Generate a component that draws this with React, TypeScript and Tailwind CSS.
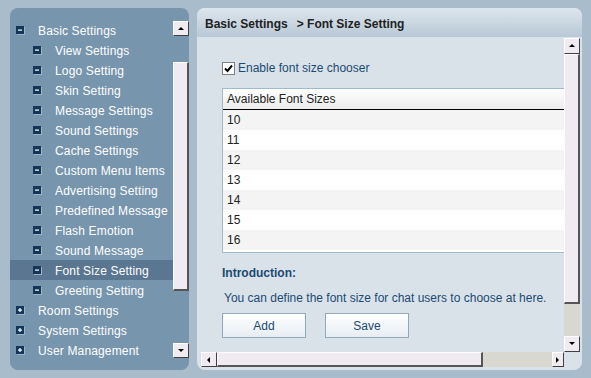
import React from "react";

type NavItem = {
  label: string;
  level: 0 | 1;
  open?: boolean;
  active?: boolean;
};

const navItems: NavItem[] = [
  { label: "Basic Settings", level: 0, open: true },
  { label: "View Settings", level: 1 },
  { label: "Logo Setting", level: 1 },
  { label: "Skin Setting", level: 1 },
  { label: "Message Settings", level: 1 },
  { label: "Sound Settings", level: 1 },
  { label: "Cache Settings", level: 1 },
  { label: "Custom Menu Items", level: 1 },
  { label: "Advertising Setting", level: 1 },
  { label: "Predefined Message", level: 1 },
  { label: "Flash Emotion", level: 1 },
  { label: "Sound Message", level: 1 },
  { label: "Font Size Setting", level: 1, active: true },
  { label: "Greeting Setting", level: 1 },
  { label: "Room Settings", level: 0 },
  { label: "System Settings", level: 0 },
  { label: "User Management", level: 0 },
];

const fontSizes = [10, 11, 12, 13, 14, 15, 16];

const TreeIcon = ({ plus }: { plus?: boolean }) => (
  <svg width="9" height="9" viewBox="0 0 9 9" className="shrink-0">
    <rect x="1" y="1" width="8" height="8" fill="#9fb3c4" />
    <rect x="0" y="0" width="8" height="8" fill="#123759" />
    <rect x="2" y="3.5" width="4" height="1.2" fill="#ffffff" />
    {plus && <rect x="3.4" y="2" width="1.2" height="4" fill="#ffffff" />}
  </svg>
);

const Arrow = ({ dir }: { dir: "up" | "down" | "left" | "right" }) => {
  const pts = {
    up: "1,5 4,2 7,5",
    down: "1,2 4,5 7,2",
    left: "5,1 2,4 5,7",
    right: "2,1 5,4 2,7",
  }[dir];
  return (
    <svg width="8" height="8" viewBox="0 0 8 8">
      <polygon points={pts} fill="#000" />
    </svg>
  );
};

const ScrollButton = ({
  dir,
  className = "",
}: {
  dir: "up" | "down" | "left" | "right";
  className?: string;
}) => (
  <div
    className={`flex items-center justify-center bg-[#efebf0] border-t border-l border-t-white border-l-white border-r border-b border-r-[#404040] border-b-[#404040] ${className}`}
  >
    <Arrow dir={dir} />
  </div>
);

const Thumb = ({ className = "" }: { className?: string }) => (
  <div
    className={`bg-[#efebf0] border-t border-l border-t-white border-l-white border-r-2 border-b-2 border-r-[#555] border-b-[#555] ${className}`}
  />
);

const App = () => {
  return (
    <div
      className="w-[591px] h-[378px] bg-[#a8bccb] flex gap-[8px] pl-[10px] pt-[8px] pb-[8px] overflow-hidden"
      style={{ fontFamily: '"Liberation Sans", Arial, sans-serif' }}
    >
      {/* left tree panel */}
      <div className="w-[179px] h-[362px] bg-[#7795ad] rounded-[8px] flex overflow-hidden">
        <div className="flex-1 pt-[12px]">
          {navItems.map((item) => (
            <div
              key={item.label}
              className={`h-[20px] flex items-center gap-[14px] text-[12px] text-white tracking-[0.15px] ${
                item.level === 0 ? "pl-[6px]" : "pl-[23px]"
              } ${item.active ? "bg-[#5a7690]" : ""}`}
            >
              <TreeIcon plus={item.level === 0 && !item.open} />
              <span className="leading-none pt-[1px] -ml-[1px]">{item.label}</span>
            </div>
          ))}
        </div>
        <div className="w-[16px] flex flex-col pt-[13px] pb-[12px]">
          <ScrollButton dir="up" className="h-[15px]" />
          <div className="flex-1 flex flex-col pt-[26px] pb-[52px]">
            <Thumb className="flex-1" />
          </div>
          <ScrollButton dir="down" className="h-[15px]" />
        </div>
      </div>

      {/* right content panel */}
      <div className="w-[385px] h-[362px] bg-[#d9e2e9] rounded-[8px] flex flex-col overflow-hidden">
        <div className="h-[29px] shrink-0 bg-gradient-to-b from-[#dde6ed] to-[#b8c8d5] flex items-center pl-[8px] text-[12px] font-bold text-[#222] pt-[2px]">
          <span>Basic Settings</span>
          <span className="ml-[9px]">&gt; Font Size Setting</span>
        </div>

        <div className="flex-1 flex flex-col pl-[4px] pr-[2px] pt-[1px] pb-[3px]">
          <div className="flex-1 flex min-h-0">
            {/* main body */}
            <div className="flex-1 overflow-hidden pl-[21px] pt-[23px]">
              <label className="flex items-center gap-[2px] h-[14px] text-[12px] text-[#1b4a73]">
                <span className="w-[13px] h-[13px] bg-white border border-[#808080] flex items-center justify-center">
                  <svg width="9" height="9" viewBox="0 0 9 9">
                    <polyline
                      points="1,4.5 3.5,7 8,1.5"
                      fill="none"
                      stroke="#000"
                      strokeWidth="2"
                    />
                  </svg>
                </span>
                <span className="ml-[1px]">Enable font size chooser</span>
              </label>

              <div className="mt-[13px] border-t border-l border-b border-[#a3b9c9] bg-white">
                <div className="h-[21px] flex items-center pl-[4px] text-[12px] text-[#222] bg-gradient-to-b from-white to-[#ececec] border-b border-black">
                  Available Font Sizes
                </div>
                {fontSizes.map((size, i) => (
                  <div
                    key={size}
                    className={`h-[20px] flex items-center pl-[4px] text-[12px] text-[#222] ${
                      i % 2 === 0 ? "bg-[#f4f4f4]" : "bg-white"
                    }`}
                  >
                    {size}
                  </div>
                ))}
                <div className="h-[2px] bg-white" />
              </div>

              <div className="mt-[11px] text-[12px] font-bold text-[#1b4a73]">
                Introduction:
              </div>
              <div className="mt-[7px] pl-[2px] text-[12px] text-[#1b4a73] whitespace-nowrap">
                You can define the font size for chat users to choose at here.
              </div>

              <div className="mt-[6px] flex gap-[19px]">
                <button className="w-[84px] h-[25px] border border-[#90a9bc] bg-gradient-to-b from-white to-[#e6edf3] text-[12px] text-[#1b4a73]">
                  Add
                </button>
                <button className="w-[84px] h-[25px] border border-[#90a9bc] bg-gradient-to-b from-white to-[#e6edf3] text-[12px] text-[#1b4a73]">
                  Save
                </button>
              </div>
            </div>

            {/* vertical scrollbar */}
            <div className="w-[16px] flex flex-col">
              <ScrollButton dir="up" className="h-[16px]" />
              <Thumb className="h-[250px]" />
              <div className="flex-1 bg-[#d8d8d0]" />
              <ScrollButton dir="down" className="h-[16px]" />
            </div>
          </div>

          {/* horizontal scrollbar */}
          <div className="h-[15px] flex">
            <ScrollButton dir="left" className="w-[16px]" />
            <Thumb className="w-[266px]" />
            <div className="flex-1 bg-[#d8d8d0]" />
            <ScrollButton dir="right" className="w-[12px]" />
            <div className="w-[16px]" />
          </div>
        </div>
      </div>
    </div>
  );
};

export default App;
